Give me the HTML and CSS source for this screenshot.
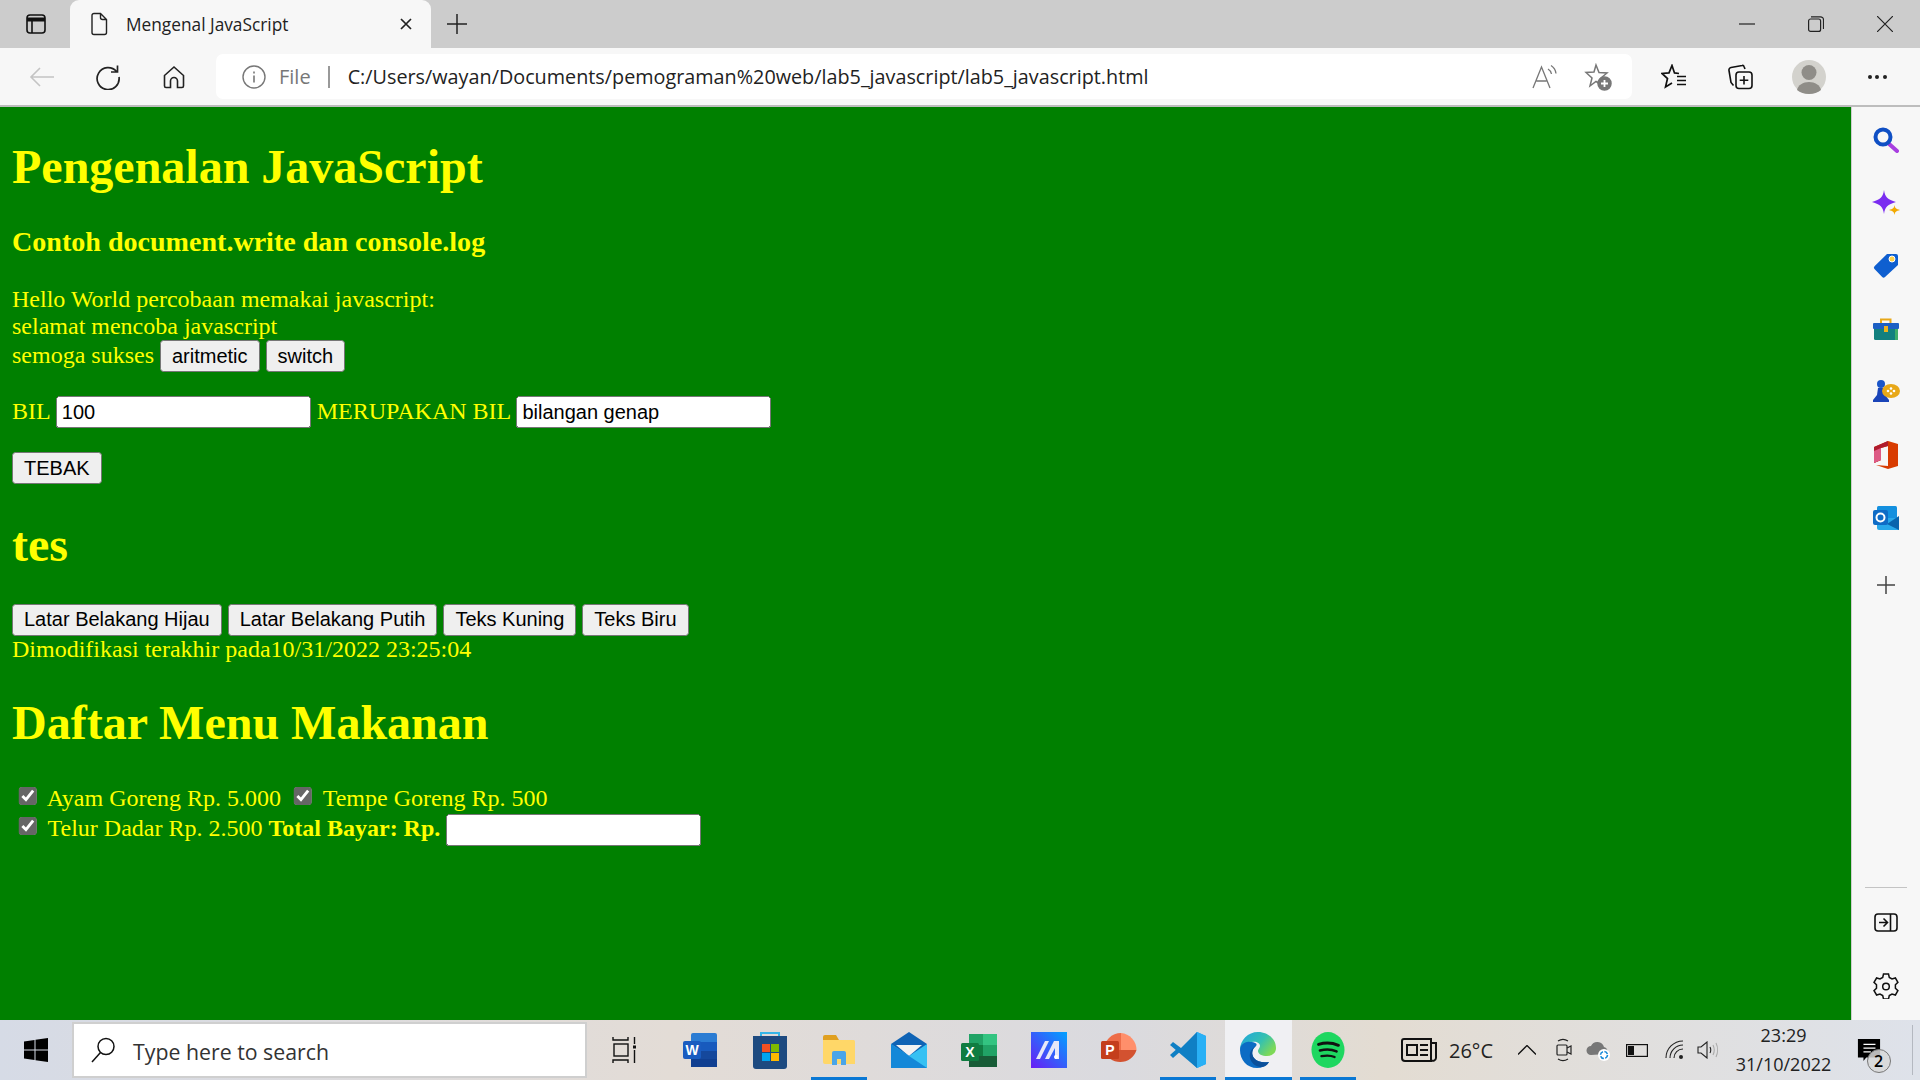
FILE: index.html
```html
<!DOCTYPE html>
<html lang="id">
<head>
    <meta charset="UTF-8">
    <title>Mengenal JavaScript</title>
    <link rel="stylesheet" href="styles.css">
</head>
<body>
<div class="browser">
    <div class="titlebar">
        <div class="tab-actions">
            <svg width="22" height="22" viewBox="0 0 22 22" fill="none" stroke="#111" stroke-width="1.6"><rect x="2" y="2" width="18" height="18" rx="3"/><path d="M2 6.5h18" stroke-width="4"/><path d="M7 6v14"/></svg>
        </div>
        <div class="tab">
            <svg class="tab-icon" width="20" height="24" viewBox="0 0 20 24" fill="none" stroke="#222" stroke-width="1.4"><path d="M3 3.5a2 2 0 0 1 2-2h6.5l6 6v13a2 2 0 0 1-2 2H5a2 2 0 0 1-2-2zM11.500 1.500v4a2 2 0 0 0 2 2h4"/></svg>
            <span class="tab-title">Mengenal JavaScript</span>
            <svg width="14" height="14" viewBox="0 0 14 14" stroke="#222" stroke-width="1.7"><path d="M2 2l10 10M12 2L2 12"/></svg>
        </div>
        <svg class="new-tab" width="22" height="22" viewBox="0 0 22 22" stroke="#222" stroke-width="1.5"><path d="M11 1v20M1 11h20"/></svg>
        <div class="window-controls">
            <div class="window-btn"><svg width="16" height="16" viewBox="0 0 16 16" stroke="#222" stroke-width="1.2"><path d="M0 8h16"/></svg></div>
            <div class="window-btn"><svg width="16" height="16" viewBox="0 0 16 16" fill="none" stroke="#222" stroke-width="1.200"><rect x="0.600" y="3" width="12" height="12.400" rx="2"/><path d="M3 .8h9.500a3 3 0 0 1 3 3V13"/></svg></div>
            <div class="window-btn"><svg width="16" height="16" viewBox="0 0 16 16" stroke="#222" stroke-width="1.200"><path d="M0 0l16 16M16 0L0 16"/></svg></div>
        </div>
    </div>

    <div class="toolbar">
        <div class="nav-btn"><svg width="26" height="22" viewBox="0 0 26 22" fill="none" stroke="#c4c4c4" stroke-width="1.600"><path d="M25 11H2M11 2l-9 9 9 9"/></svg></div>
        <div class="nav-btn"><svg width="26" height="26" viewBox="0 0 26 26" fill="none" stroke="#222" stroke-width="1.700"><path d="M21.500 7.500A11 11 0 1 0 24 13M22.500 1.500v6.500H16"/></svg></div>
        <div class="nav-btn"><svg width="24" height="24" viewBox="0 0 24 24" fill="none" stroke="#222" stroke-width="1.600"><path d="M2.500 10.500L12 2l9.500 8.500V21a1.500 1.500 0 0 1-1.500 1.500h-4.500V16a3.500 3.500 0 0 0-7 0v6.500H4A1.500 1.500 0 0 1 2.500 21z"/></svg></div>
        <div class="address">
            <svg width="24" height="24" viewBox="0 0 24 24" fill="none" stroke="#777" stroke-width="1.400"><circle cx="12" cy="12" r="11"/><path d="M12 10.500v7M12 6.500v2" stroke-width="1.600"/></svg>
            <span class="scheme">File</span>
            <span class="addr-sep"></span>
            <span class="url">C:/Users/wayan/Documents/pemograman%20web/lab5_javascript/lab5_javascript.html</span>
            <svg class="addr-read" width="26" height="26" viewBox="0 0 26 26" fill="none" stroke="#777" stroke-width="1.300"><path d="M1 24L9.500 3 18 24M4.500 17h10M16 5a7 7 0 0 1 3.500 5M19 1.500a11 11 0 0 1 5 8"/></svg>
            <svg class="addr-star" width="28" height="28" viewBox="0 0 28 28" fill="none" stroke="#777" stroke-width="1.500"><path d="M12 2l3 7.500 8 .5-6 5 2 7.500-7-4-6 4.500 2-8-6-5.500 8-.5z"/><circle cx="20.500" cy="20.500" r="6.500" fill="#777"/><path d="M20.500 17v7M17 20.500h7" stroke="#fff" stroke-width="1.800"/></svg>
        </div>
        <div class="toolbar-right">
            <div class="tool-btn tool-fav"><svg width="26" height="26" viewBox="0 0 26 26" fill="none" stroke="#111" stroke-width="1.700"><path d="M18 9.500l-4.500-.6L11 1.500 8 8.900l-7 .6 5.500 5-2 8.500 6.500-4"/><path d="M16 12.500h9M16 16.500h9M16 20.500h9"/></svg></div>
            <div class="tool-btn tool-coll"><svg width="25" height="26" viewBox="0 0 25 26" fill="none" stroke="#111" stroke-width="1.600"><rect x="8" y="8" width="16" height="16.500" rx="3"/><path d="M16 12v8.500M11.700 16.300h8.600M17 5l-1-2.500a1.500 1.500 0 0 0-1.800-1L3 3.500A2.500 2.500 0 0 0 1 6.500l2 12 2.500 3"/></svg></div>
            <div class="tool-btn"><svg width="34" height="34" viewBox="0 0 34 34"><circle cx="17" cy="17" r="17" fill="#d3d2cd"/><circle cx="17" cy="12.500" r="7.500" fill="#8f8d88"/><path d="M5 30c1-5 6-8 12-8s11 3 12 8c-3 2.500-7.500 4-12 4s-9-1.500-12-4z" fill="#8f8d88"/></svg></div>
            <div class="tool-btn more"><i></i><i></i><i></i></div>
        </div>
    </div>
    <div class="toolbar-line"></div>

    <div class="main">
        <div class="page">
            <div class="page-zoom">
                <h1>Pengenalan JavaScript</h1>
                <h3>Contoh document.write dan console.log</h3>
                Hello World percobaan memakai javascript:<br>
                selamat mencoba javascript<br>
                semoga sukses
                <button>aritmetic</button>
                <button>switch</button>
                <p>BIL <input type="text" value="100"> MERUPAKAN BIL <input type="text" value="bilangan genap"></p>
                <p><button>TEBAK</button></p>
                <h1>tes</h1>
                <button>Latar Belakang Hijau</button>
                <button>Latar Belakang Putih</button>
                <button>Teks Kuning</button>
                <button>Teks Biru</button><br>
                Dimodifikasi terakhir pada10/31/2022 23:25:04
                <h1>Daftar Menu Makanan</h1>
                <div class="menu">
                    <input type="checkbox" checked> Ayam Goreng Rp. 5.000
                    <input type="checkbox" checked> Tempe Goreng Rp. 500<br>
                    <input type="checkbox" checked> Telur Dadar Rp. 2.500
                    <b>Total Bayar: Rp.</b> <input type="text">
                </div>
            </div>
        </div>

        <div class="sidebar">
            <div class="side-icons">
                <div class="side-btn"><svg width="26" height="26" viewBox="0 0 26 26" fill="none"><path d="M15 16l9 8" stroke="#a83fe0" stroke-width="4" stroke-linecap="round"/><circle cx="10" cy="10" r="7.500" stroke="#0f4fc4" stroke-width="4"/></svg></div>
                <div class="side-btn"><svg width="28" height="26" viewBox="0 0 28 26"><path d="M12 0c1 7 3.500 9.500 12 12-8.500 2.500-11 5-12 12-1-7-3.500-9.500-12-12C8.500 9.500 11 7 12 0z" fill="#7a2cf0"/><path d="M22.500 15c.5 3 1.500 4 5.500 5-4 1-5 2-5.500 5-.5-3-1.500-4-5.500-5 4-1 5-2 5.500-5z" fill="#f2a900"/></svg></div>
                <div class="side-btn"><svg width="26" height="26" viewBox="0 0 26 26"><path d="M14 1h9a2 2 0 0 1 2 2v9L12 24a2 2 0 0 1-2.800 0L1.500 16a2 2 0 0 1 0-2.800z" fill="#0f5fd0"/><circle cx="19" cy="6" r="3" fill="#ffd24a" stroke="#fff"/></svg></div>
                <div class="side-btn"><svg width="28" height="24" viewBox="0 0 28 24"><path d="M9 7V2.500h9.500V7" fill="none" stroke="#e8a818" stroke-width="2"/><rect x="2" y="9" width="24" height="14" rx="1.500" fill="#12807f"/><rect x="1" y="6" width="26" height="6" rx="1" fill="#1c5fc4"/><rect x="12" y="9" width="4" height="6" fill="#eeb21c"/><rect x="23" y="12" width="3" height="11" fill="#3fae6a"/></svg></div>
                <div class="side-btn"><svg width="28" height="26" viewBox="0 0 28 26"><circle cx="9" cy="5" r="4" fill="#1a55c8"/><path d="M6 9h6l1 7 4 5v2H1v-2l4-5z" fill="#1a44b8"/><ellipse cx="19" cy="12" rx="9" ry="7" fill="#e8a818"/><circle cx="16" cy="12" r="1.300" fill="#fff"/><circle cx="19" cy="9.500" r="1.300" fill="#fff"/><circle cx="22" cy="12" r="1.300" fill="#fff"/><circle cx="19" cy="14.500" r="1.300" fill="#fff"/></svg></div>
                <div class="side-btn"><svg width="26" height="30" viewBox="0 0 26 30"><path d="M1 7l14-6 10 3v22l-10 3-12-4 12 1V6L8 8v12l-7 3z" fill="#d83b01"/><path d="M1 7l14-6v5L8 8v12l-7 3z" fill="#b01c2e"/><path d="M1 11l7-3v12l-7 3z" fill="#dd5a85"/></svg></div>
                <div class="side-btn"><svg width="26" height="26" viewBox="0 0 26 26"><rect x="4" y="1" width="20" height="20" rx="1.500" fill="#1490df"/><path d="M4 13h22v12H6a2 2 0 0 1-2-2z" fill="#28a8ea"/><path d="M26 11L14 19l12 6z" fill="#0a64ad"/><rect x="0" y="5" width="15" height="15" rx="2" fill="#0f6cc6"/><circle cx="7.500" cy="12.500" r="4" fill="none" stroke="#fff" stroke-width="2"/></svg></div>
                <div class="side-btn side-add"><svg width="18" height="18" viewBox="0 0 18 18" stroke="#444" stroke-width="1.500"><path d="M9 0v18M0 9h18"/></svg></div>
            </div>
            <div class="side-bottom">
                <div class="side-rule"></div>
                <div class="side-btn"><svg width="24" height="20" viewBox="0 0 24 20" fill="none" stroke="#111" stroke-width="1.600"><rect x="1" y="1" width="22" height="17" rx="3"/><path d="M16.500 1v17M5 9.500h8M9.500 5.500l4 4-4 4"/></svg></div>
                <div class="side-btn"><svg width="26" height="26" viewBox="0 0 26 26" fill="none" stroke="#111" stroke-width="1.500"><path d="M10.500 1h5l.8 3.500 2.700 1.500 3.400-1 2.500 4.300-2.500 2.500v3.400l2.500 2.500-2.500 4.300-3.400-1-2.700 1.500-.8 3.500h-5l-.8-3.500L7 21l-3.400 1L1 17.700l2.500-2.500v-3.400L1 9.300 3.600 5 7 6l2.700-1.500z"/><circle cx="13" cy="13.500" r="3.300"/></svg></div>
            </div>
        </div>
    </div>
</div>

<div class="taskbar">
    <div class="start"><svg width="24" height="24" viewBox="0 0 24 24" fill="#000"><path d="M0 3.500l10.500-1.500v9.500H0zM11.500 1.800L24 0v11.500H11.500zM0 12.500h10.500V22L0 20.500zM11.500 12.500H24V24l-12.500-1.800z"/></svg></div>
    <div class="search">
        <svg width="24" height="26" viewBox="0 0 24 26" fill="none" stroke="#111" stroke-width="1.500"><circle cx="15" cy="9.500" r="8"/><path d="M9.500 15.500L1 25"/></svg>
        <span>Type here to search</span>
    </div>
    <div class="task-view"><svg width="24" height="26" viewBox="0 0 24 26" fill="none" stroke="#111" stroke-width="1.400"><path d="M1 0v3h15V0M1 26v-3h15v3"/><rect x="2" y="7" width="14" height="12"/><path d="M22.500 0v7M22.500 13v13"/><rect x="21" y="8.500" width="3" height="3" fill="#111" stroke="none"/></svg></div>
    <div class="apps">
        <div class="app"><svg width="36" height="36" viewBox="0 0 36 36"><rect x="9" y="1" width="26" height="34" rx="2" fill="#2b7cd3"/><rect x="9" y="10" width="26" height="9" fill="#185abd"/><rect x="9" y="19" width="26" height="8" fill="#15489c"/><rect x="9" y="27" width="26" height="8" fill="#103f91"/><rect x="1" y="9" width="18" height="18" rx="2" fill="#1a5cc0"/><text x="10" y="23" class="app-letter">W</text></svg></div>
        <div class="app"><svg width="36" height="40" viewBox="0 0 36 40"><path d="M9 8V3h18v5" fill="none" stroke="#35b6e8" stroke-width="2"/><path d="M1 6h34v30a3 3 0 0 1-3 3H4a3 3 0 0 1-3-3z" fill="#1d4a80"/><rect x="10" y="14" width="8" height="8" fill="#f25022"/><rect x="19" y="14" width="8" height="8" fill="#7fba00"/><rect x="10" y="23" width="8" height="8" fill="#00a4ef"/><rect x="19" y="23" width="8" height="8" fill="#ffb900"/></svg></div>
        <div class="app app-on"><svg width="34" height="32" viewBox="0 0 34 32"><path d="M1 3a2 2 0 0 1 2-2h11l3 5H1z" fill="#e0a020"/><path d="M1 6h31a2 2 0 0 1 1 2v22H3a2 2 0 0 1-2-2z" fill="#ffd768"/><path d="M10 31V19a2 2 0 0 1 2-2h10a2 2 0 0 1 2 2v12h-5v-6h-4v6z" fill="#4aa5e8"/></svg></div>
        <div class="app"><svg width="36" height="36" viewBox="0 0 36 36"><path d="M18 0l18 12v24H0V12z" fill="#0f63b5"/><path d="M5 13h26L18 24z" fill="#f2f2f2"/><path d="M0 12l18 12 18-12v24H0z" fill="#36c1f3"/><path d="M0 36V12l18 12 18 12z" fill="#1488d8"/></svg></div>
        <div class="app"><svg width="36" height="34" viewBox="0 0 36 34"><rect x="8" y="1" width="14" height="11" fill="#21a366"/><rect x="22" y="1" width="14" height="11" fill="#33c481"/><rect x="8" y="12" width="14" height="11" fill="#107c41"/><rect x="22" y="12" width="14" height="11" fill="#21a366"/><rect x="8" y="23" width="28" height="11" fill="#185c37"/><rect x="0" y="10" width="18" height="18" rx="1.500" fill="#107c41"/><text x="9" y="24" class="app-letter">X</text></svg></div>
        <div class="app"><svg width="36" height="36" viewBox="0 0 36 36"><defs><linearGradient id="mgrad" x1="0" y1="1" x2="1" y2="0"><stop offset="0" stop-color="#6a1cf5"/><stop offset="1" stop-color="#00a2ff"/></linearGradient></defs><rect width="36" height="36" fill="url(#mgrad)"/><path d="M5 27L14 9h4l-9 18zM14 27L23 9h5v18h-4V16l-6 11z" fill="#e8e8f8"/><circle cx="25" cy="25" r="2" fill="#fff"/></svg></div>
        <div class="app"><svg width="36" height="36" viewBox="0 0 36 36"><path d="M20 1a17 17 0 0 1 15.500 17H20z" fill="#ff8f6b"/><path d="M20 1A17 17 0 0 0 3 18h17z" fill="#ed6c47"/><path d="M3 18h32.500A17 17 0 0 1 3 18z" fill="#d35230"/><rect x="0" y="9" width="18" height="18" rx="1.500" fill="#c43e1c"/><text x="9" y="23" class="app-letter">P</text></svg></div>
        <div class="app app-on"><svg width="36" height="38" viewBox="0 0 36 38"><path d="M27 1l9 4v28l-9 4L10 20z" fill="#1f9cf0"/><path d="M27 1v36L0 14l3-3 8 6z" fill="#0f7fc4"/><path d="M0 24l3 3 9-8-3-3z" fill="#0f7fc4"/><path d="M27 1l9 4v28l-9 4z" fill="#29b0f5"/></svg></div>
        <div class="app app-on app-active"><svg width="36" height="38" viewBox="0 0 36 38"><defs><linearGradient id="egrad" x1="0" y1="0" x2="1" y2=".6"><stop offset="0" stop-color="#1fa5e0"/><stop offset=".6" stop-color="#35c1b0"/><stop offset="1" stop-color="#7ed957"/></linearGradient></defs><path d="M18 1c10 0 18 7 18 16 0 5-4 8-9 8-5 0-9-2-9-5 0-2 2-3 2-5 0-3-4-5-8-4C6 12 1 16 0 19 0 9 8 1 18 1z" fill="url(#egrad)"/><path d="M0 19c0-5 5-9 10-8 5 0 8 2 6 4-4 3-5 8-2 12 3 4 9 5 15 4-3 4-7 6-12 6C7 37 0 29 0 19z" fill="#0c6cc4"/><path d="M14 27c-3-4-2-9 2-12-4 2-7 6-6 12 1 5 6 9 11 9 3 0 6-1 8-5-6 1-12 0-15-4z" fill="#0a4f9a"/></svg></div>
        <div class="app app-on"><svg width="34" height="36" viewBox="0 0 36 38"><ellipse cx="18" cy="19" rx="17.500" ry="19" fill="#1ed760"/><g fill="none" stroke="#111" stroke-linecap="round"><path d="M8 13c7-2 14-2 21 1" stroke-width="3.200"/><path d="M9.500 19.500c6-1.500 12-1.500 17.500 1" stroke-width="2.800"/><path d="M11 25.500c5-1 10-1 14 1" stroke-width="2.400"/></g></svg></div>
    </div>
    <div class="tray">
        <svg class="tray-news" width="36" height="24" viewBox="0 0 36 24" fill="none" stroke="#111" stroke-width="2"><path d="M3 1h27v22H4a3 3 0 0 1-3-3V3a2 2 0 0 1 2-2zM30 5h5v15a3 3 0 0 1-5 2"/><rect x="6" y="7" width="10" height="10"/><path d="M19 7h8M19 12h8M19 17h8"/></svg>
        <span class="tray-temp">26°C</span>
        <svg class="tray-up" width="18" height="10" viewBox="0 0 18 10" fill="none" stroke="#111" stroke-width="1.300"><path d="M0 9.500l9-9 9 9"/></svg>
        <svg class="tray-meet" width="16" height="24" viewBox="0 0 16 24" fill="none" stroke="#222" stroke-width="1.200"><rect x="1" y="7" width="10" height="10" rx="1"/><path d="M11 10l4-2v8l-4-2M2 3c3-2 7-2 10 0M2 21c3 2 7 2 10 0"/></svg>
        <svg class="tray-cloud" width="24" height="22" viewBox="0 0 24 22"><path d="M5 16a4.500 4.500 0 0 1 0-9 7 7 0 0 1 13 1 4 4 0 0 1 2 7z" fill="#777"/><circle cx="18" cy="16" r="6" fill="#fff"/><circle cx="18" cy="16" r="3.500" fill="none" stroke="#1488d8" stroke-width="1.600" stroke-dasharray="4 1.500"/></svg>
        <svg class="tray-batt" width="22" height="13" viewBox="0 0 22 13" fill="none" stroke="#111" stroke-width="1.200"><rect x=".6" y=".6" width="20.800" height="11.800"/><rect x="2" y="2" width="6" height="9" fill="#111" stroke="none"/></svg>
        <svg class="tray-wifi" width="20" height="20" viewBox="0 0 20 20" fill="none" stroke="#222" stroke-width="1.100"><path d="M1 18A17 17 0 0 1 18 1M5 18A13 13 0 0 1 18 5M9 18a9 9 0 0 1 9-9"/><circle cx="16" cy="17" r="2" fill="#222" stroke="none"/></svg>
        <svg class="tray-vol" width="22" height="18" viewBox="0 0 22 18" fill="none" stroke="#222" stroke-width="1.100"><path d="M1 6h3l6-5v16l-6-5H1zM13 6c1 2 1 4 0 6"/><path d="M16 4c1.500 3 1.500 7 0 10M19 2c2 4 2 10 0 14" stroke="#aaa"/></svg>
        <div class="clock"><span>23:29</span><span>31/10/2022</span></div>
        <div class="notify">
            <svg width="24" height="24" viewBox="0 0 26 26"><path d="M1 1h24v20H10l-3 4v-4H1z" fill="#000"/><path d="M7 7h13M7 11h13M7 15h8" stroke="#fff" stroke-width="1.300"/></svg>
            <span class="notify-count">2</span>
        </div>
        <div class="show-desktop"></div>
    </div>
</div>
</body>
</html>
```

FILE: styles.css
```css
html, body {
    margin: 0;
    padding: 0;
    height: 100%;
    overflow: hidden;
}
body {
    width: 1920px;
    height: 1080px;
    display: flex;
    flex-direction: column;
    font-family: "Open Sans", "Noto Sans", sans-serif;
}
svg {
    display: block;
    flex-shrink: 0;
}

/* browser frame */
.browser {
    height: 1020px;
    display: flex;
    flex-direction: column;
}
.titlebar {
    height: 48px;
    background: #cccccc;
    display: flex;
    align-items: center;
}
.tab-actions {
    width: 70px;
    box-sizing: border-box;
    display: flex;
    justify-content: center;
    padding-left: 2px;
}
.tab {
    width: 361px;
    height: 48px;
    box-sizing: border-box;
    padding: 0 18px 0 19px;
    background: #f7f7f7;
    border-radius: 9px 9px 0 0;
    display: flex;
    align-items: center;
}
.tab-title {
    margin-left: 17px;
    flex: 1;
    font-size: 17.3px;
    color: #222;
}
.new-tab {
    margin-left: 15px;
}
.window-controls {
    margin-left: auto;
    display: flex;
    padding-right: 1px;
}
.window-btn {
    width: 69px;
    height: 48px;
    display: flex;
    align-items: center;
    justify-content: center;
}
.toolbar {
    height: 57px;
    background: #f7f7f7;
    display: flex;
    align-items: center;
    padding-left: 9px;
}
.toolbar-line {
    height: 2px;
    background: #bdbdbd;
}
.nav-btn {
    width: 66px;
    display: flex;
    justify-content: center;
}
.address {
    width: 1416px;
    height: 45px;
    box-sizing: border-box;
    margin-left: 9px;
    padding-left: 26px;
    background: #fff;
    border-radius: 7px;
    display: flex;
    align-items: center;
}
.scheme {
    margin-left: 13px;
    font-size: 20px;
    color: #777;
}
.addr-sep {
    width: 2px;
    height: 22px;
    margin: 0 18px 0 17px;
    background: #999;
}
.url {
    font-size: 19.8px;
    color: #222;
}
.addr-read {
    margin-left: auto;
}
.addr-star {
    margin-left: 26px;
    margin-right: 20px;
}
.toolbar-right {
    display: flex;
    margin-left: 7px;
}
.tool-btn {
    width: 68px;
    box-sizing: border-box;
    display: flex;
    align-items: center;
    justify-content: center;
}
.tool-fav {
    padding-left: 2px;
}
.tool-coll {
    padding-right: 2px;
}
.more {
    gap: 3.500px;
}
.more i {
    width: 4px;
    height: 4px;
    border-radius: 50%;
    background: #222;
}
.main {
    flex: 1;
    display: flex;
    min-height: 0;
}

/* the page itself, at 150% browser zoom */
.page {
    flex: 1;
    background: #008000;
    overflow: hidden;
}
.page-zoom {
    zoom: 1.5;
    margin: 8px;
    color: #ffff00;
    font-family: "Liberation Serif", serif;
}
.page-zoom button,
.page-zoom input {
    font-family: "Liberation Sans", sans-serif;
}
.page-zoom input[type="text"] {
    width: 170px;
    box-sizing: border-box;
}
.menu input[type="checkbox"] {
    accent-color: #666;
}

/* edge sidebar */
.sidebar {
    width: 68px;
    background: #f7f7f7;
    border-left: 1px solid #cfcfcf;
    display: flex;
    flex-direction: column;
    justify-content: space-between;
    align-items: center;
}
.side-icons {
    padding-top: 1px;
}
.side-btn {
    height: 63px;
    width: 68px;
    display: flex;
    align-items: center;
    justify-content: center;
}
.side-add {
    margin-top: 4px;
}
.side-bottom {
    padding-bottom: 3px;
}
.side-rule {
    width: 42px;
    height: 1px;
    margin: 0 auto 3px;
    background: #c4c4c4;
}

/* windows taskbar */
.taskbar {
    height: 60px;
    display: flex;
    align-items: center;
    background: linear-gradient(90deg, #d6dbe6 0%, #e3dcd6 35%, #dadadf 58%, #e3dcd2 72%, #dee2ea 100%);
}
.start {
    width: 72px;
    display: flex;
    justify-content: center;
}
.search {
    width: 515px;
    height: 56px;
    box-sizing: border-box;
    padding-left: 17px;
    background: #fff;
    border: 2px solid #cfcfcf;
    display: flex;
    align-items: center;
}
.search span {
    margin: 3px 0 0 18px;
    font-size: 21.300px;
    color: #333;
}
.task-view {
    width: 74px;
    display: flex;
    justify-content: center;
}
.apps {
    display: flex;
    margin-left: 4px;
}
.app {
    width: 69.800px;
    height: 60px;
    box-sizing: border-box;
    display: flex;
    align-items: center;
    justify-content: center;
    padding: 0 0 1px;
}
.app-on {
    background: linear-gradient(#0a78d4, #0a78d4) center bottom / 56px 3px no-repeat;
}
.app-active {
    background:
        linear-gradient(#0a78d4, #0a78d4) center bottom / 67px 3px no-repeat,
        linear-gradient(#f0f0f3, #f0f0f3) center / 67px 100% no-repeat;
}
.app-letter {
    font-family: "Liberation Sans", sans-serif;
    font-size: 14px;
    font-weight: bold;
    fill: #fff;
    text-anchor: middle;
}
.tray {
    flex: 1;
    display: flex;
    align-items: center;
    padding-left: 38px;
    color: #222;
}
.tray-temp {
    margin-left: 12px;
    font-size: 20px;
}
.tray-up {
    margin-left: 25px;
}
.tray-meet {
    margin-left: 20px;
}
.tray-cloud {
    margin-left: 14px;
}
.tray-batt {
    margin-left: 16px;
}
.tray-wifi {
    margin-left: 16.500px;
}
.tray-vol {
    margin-left: 12px;
}
.clock {
    width: 100px;
    margin-left: 15px;
    display: flex;
    flex-direction: column;
    align-items: center;
    gap: 8px;
    font-size: 18px;
    line-height: 21px;
}
.notify {
    position: relative;
    margin-left: 23px;
}
.notify-count {
    position: absolute;
    left: 10px;
    top: 11px;
    width: 24px;
    height: 24px;
    box-sizing: border-box;
    border: 1px solid #777;
    border-radius: 50%;
    background: rgba(216, 216, 216, 0.85);
    font-size: 16px;
    font-weight: 600;
    line-height: 22px;
    text-align: center;
    color: #000;
}
.show-desktop {
    align-self: stretch;
    width: 7px;
    margin-left: auto;
    border-left: 1px solid #b4b8c0;
}
```
